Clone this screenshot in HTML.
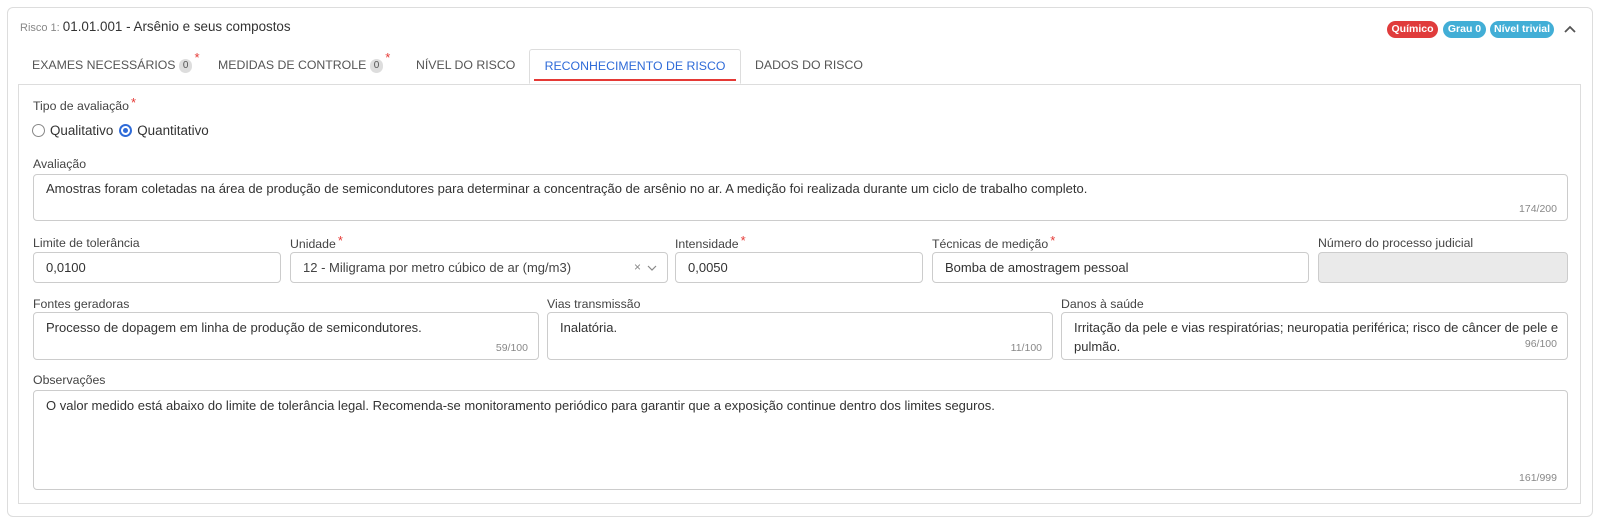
<!DOCTYPE html>
<html><head><meta charset="utf-8"><style>
*{box-sizing:border-box;margin:0;padding:0}
body{width:1600px;height:522px;background:#fff;font-family:"Liberation Sans",sans-serif;color:#333;position:relative;overflow:hidden}
.abs{position:absolute}
.card{left:7px;top:7px;width:1586px;height:510px;border:1px solid #ddd;border-radius:6px}
.panel{left:18px;top:84px;width:1563px;height:420px;border:1px solid #ddd;border-top:1px solid #ddd}
.lbl{font-size:12.3px;color:#444;white-space:nowrap}
.req{color:#e53935;font-size:13px;position:relative;top:-3px;margin-left:2px}
.box{border:1px solid #ccc;border-radius:4px;background:#fff;font-size:13px;color:#333;padding:0 12px;white-space:nowrap}
.cnt{position:absolute;right:10px;bottom:5px;font-size:10.5px;color:#888}
.tab{top:49px;height:35px;font-size:12.3px;color:#555;line-height:32px;white-space:nowrap}
.zero{display:inline-block;background:#ddd;border-radius:8px;font-size:10px;padding:0 4px;line-height:14px;color:#555;vertical-align:middle}
.badge{top:21px;height:17px;border-radius:9px;color:#fff;font-size:10.5px;font-weight:bold;line-height:17px;text-align:center}
</style></head><body>
<div class="abs card"></div>
<div class="abs" style="left:20px;top:19px;font-size:13.4px;color:#333"><span style="font-size:11px;color:#888">Risco 1: </span>01.01.001 - Arsênio e seus compostos</div>
<div class="abs badge" style="left:1387px;width:51px;background:#e03c3c">Químico</div>
<div class="abs badge" style="left:1443px;width:43px;background:#42aed6">Grau 0</div>
<div class="abs badge" style="left:1490px;width:64px;background:#42aed6">Nível trivial</div>
<svg class="abs" style="left:1563px;top:24px" width="14" height="10" viewBox="0 0 14 10"><path d="M2 8 L7 3 L12 8" fill="none" stroke="#555" stroke-width="1.8"/></svg>

<div class="abs panel"></div>
<div class="abs tab" style="left:32px">EXAMES NECESSÁRIOS <span class="zero">0</span><span class="req" style="top:-7px">*</span></div>
<div class="abs tab" style="left:218px">MEDIDAS DE CONTROLE <span class="zero">0</span><span class="req" style="top:-7px">*</span></div>
<div class="abs tab" style="left:416px">NÍVEL DO RISCO</div>
<div class="abs tab" style="left:529px;width:212px;border:1px solid #ddd;border-bottom:1px solid #fff;background:#fff;border-radius:3px 3px 0 0;text-align:center;color:#2f6bd8">RECONHECIMENTO DE RISCO</div>
<div class="abs" style="left:534px;top:79px;width:202px;height:2px;background:#e53935"></div>
<div class="abs tab" style="left:755px">DADOS DO RISCO</div>

<div class="abs lbl" style="left:33px;top:98px">Tipo de avaliação<span class="req">*</span></div>
<div class="abs" style="left:32px;top:123px;font-size:13.4px;white-space:nowrap;display:flex;align-items:center">
<span style="width:13px;height:13px;border:1px solid #888;border-radius:50%;display:inline-block;margin-right:5px"></span>Qualitativo
<span style="width:13px;height:13px;border:2px solid #2f6bd8;border-radius:50%;display:inline-block;margin:0 5px 0 6px;position:relative"><span style="position:absolute;left:2px;top:2px;width:5px;height:5px;border-radius:50%;background:#2f6bd8"></span></span>Quantitativo</div>

<div class="abs lbl" style="left:33px;top:157px">Avaliação</div>
<div class="abs box" style="left:33px;top:174px;width:1535px;height:47px;padding-top:6px">Amostras foram coletadas na área de produção de semicondutores para determinar a concentração de arsênio no ar. A medição foi realizada durante um ciclo de trabalho completo.<span class="cnt">174/200</span></div>

<div class="abs lbl" style="left:33px;top:236px">Limite de tolerância</div>
<div class="abs lbl" style="left:290px;top:236px">Unidade<span class="req">*</span></div>
<div class="abs lbl" style="left:675px;top:236px">Intensidade<span class="req">*</span></div>
<div class="abs lbl" style="left:932px;top:236px">Técnicas de medição<span class="req">*</span></div>
<div class="abs lbl" style="left:1318px;top:236px">Número do processo judicial</div>
<div class="abs box" style="left:33px;top:252px;width:248px;height:31px;line-height:29px">0,0100</div>
<div class="abs box" style="left:290px;top:252px;width:378px;height:31px;line-height:29px;color:#444">12 - Miligrama por metro cúbico de ar (mg/m3)<span style="position:absolute;right:26px;color:#888;font-size:12px">×</span><svg style="position:absolute;right:10px;top:12px" width="10" height="7" viewBox="0 0 10 7"><path d="M1 1 L5 5 L9 1" fill="none" stroke="#888" stroke-width="1.2"/></svg></div>
<div class="abs box" style="left:675px;top:252px;width:248px;height:31px;line-height:29px">0,0050</div>
<div class="abs box" style="left:932px;top:252px;width:377px;height:31px;line-height:29px">Bomba de amostragem pessoal</div>
<div class="abs box" style="left:1318px;top:252px;width:250px;height:31px;background:#eaeaea"></div>

<div class="abs lbl" style="left:33px;top:297px">Fontes geradoras</div>
<div class="abs lbl" style="left:547px;top:297px">Vias transmissão</div>
<div class="abs lbl" style="left:1061px;top:297px">Danos à saúde</div>
<div class="abs box" style="left:33px;top:312px;width:506px;height:48px;padding-top:7px">Processo de dopagem em linha de produção de semicondutores.<span class="cnt">59/100</span></div>
<div class="abs box" style="left:547px;top:312px;width:506px;height:48px;padding-top:7px">Inalatória.<span class="cnt">11/100</span></div>
<div class="abs box" style="left:1061px;top:312px;width:507px;height:48px;padding-top:5px;white-space:normal;line-height:19px;padding-right:8px">Irritação da pele e vias respiratórias; neuropatia periférica; risco de câncer de pele e pulmão.<span class="cnt">96/100</span></div>

<div class="abs lbl" style="left:33px;top:373px">Observações</div>
<div class="abs box" style="left:33px;top:390px;width:1535px;height:100px;padding-top:7px">O valor medido está abaixo do limite de tolerância legal. Recomenda-se monitoramento periódico para garantir que a exposição continue dentro dos limites seguros.<span class="cnt">161/999</span></div>
</body></html>
